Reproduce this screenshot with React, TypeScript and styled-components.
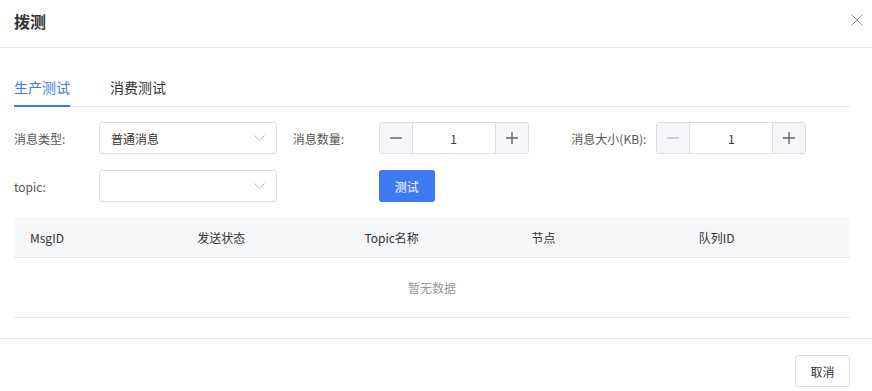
import React from "react";
import styled, { createGlobalStyle } from "styled-components";

const Global = createGlobalStyle`
  html, body { margin: 0; padding: 0; background: #fff; }
  body { font-family: "Noto Sans CJK SC", "Noto Sans", sans-serif; color: #333; }
  * { box-sizing: border-box; }
`;

const Modal = styled.div`
  width: 872px;
  height: 391px;
  background: #fff;
  overflow: hidden;
  display: flex;
  flex-direction: column;
`;

const Header = styled.div`
  height: 48px;
  border-bottom: 1px solid #e4e4ec;
  display: flex;
  align-items: center;
  justify-content: space-between;
  padding: 0 8px 0 14px;
  flex-shrink: 0;
`;

const Title = styled.div`
  font-size: 16px;
  font-weight: 700;
  color: #333;
  line-height: 20px;
  margin-top: -6px;
`;

const Close = styled.button`
  border: none;
  background: none;
  padding: 0;
  width: 14px;
  height: 14px;
  margin-top: -8px;
  display: flex;
  align-items: center;
  justify-content: center;
  cursor: pointer;
`;

const Body = styled.div`
  padding: 26px 22px 0 14px;
  flex-shrink: 0;
`;

const Tabs = styled.div`
  display: flex;
  gap: 40px;
  border-bottom: 1px solid #e4e4ec;
  height: 33px;
`;

const Tab = styled.div<{ $active?: boolean }>`
  font-size: 14px;
  line-height: 20px;
  padding-top: 3px;
  color: ${(p) => (p.$active ? "#3d79f2" : "#333")};
  border-bottom: 2px solid ${(p) => (p.$active ? "#3d79f2" : "transparent")};
  margin-bottom: -1px;
  height: 33px;
`;

const Form = styled.div`
  display: grid;
  grid-template-columns: repeat(3, 1fr);
  row-gap: 16px;
  margin-top: 15px;
`;

const Item = styled.div`
  display: flex;
  align-items: center;
  height: 32px;
`;

const Label = styled.div<{ $w?: number }>`
  width: ${(p) => p.$w ?? 85}px;
  font-size: 12px;
  color: #555;
  flex-shrink: 0;
`;

const SelectBox = styled.div`
  width: 178px;
  height: 32px;
  border: 1px solid #dcdce2;
  border-radius: 3px;
  display: flex;
  align-items: center;
  justify-content: space-between;
  padding: 0 11px 0 11px;
  font-size: 12px;
  color: #333;
`;

const NumberBox = styled.div`
  width: 150px;
  height: 32px;
  border: 1px solid #dcdce2;
  border-radius: 3px;
  display: flex;
  overflow: hidden;
`;

const StepBtn = styled.div<{ $disabled?: boolean }>`
  width: 32px;
  height: 100%;
  background: #f5f6fa;
  display: flex;
  align-items: center;
  justify-content: center;
  color: ${(p) => (p.$disabled ? "#c0c0c8" : "#666")};
  flex-shrink: 0;
`;

const NumValue = styled.div`
  flex: 1;
  border-left: 1px solid #dcdce2;
  border-right: 1px solid #dcdce2;
  display: flex;
  align-items: center;
  justify-content: center;
  font-size: 12px;
  color: #333;
`;

const PrimaryButton = styled.button`
  width: 56px;
  height: 32px;
  border: none;
  border-radius: 3px;
  background: #3d79f2;
  color: #fff;
  font-family: inherit;
  font-size: 12px;
  font-weight: 400;
  padding: 0;
`;

const Table = styled.div`
  margin-top: 16px;
  border-bottom: 1px solid #e4e4ec;
`;

const HeadRow = styled.div`
  display: grid;
  grid-template-columns: repeat(5, 1fr);
  height: 40px;
  background: #f6f7f9;
  border-bottom: 1px solid #e4e4ec;
  align-items: center;
`;

const HeadCell = styled.div`
  padding-left: 16px;
  font-size: 12px;
  font-weight: 400;
  color: #333;
`;

const Empty = styled.div`
  height: 59px;
  display: flex;
  align-items: center;
  justify-content: center;
  font-size: 12px;
  color: #999;
`;

const Footer = styled.div`
  margin-top: 20px;
  border-top: 1px solid #e4e4ec;
  display: flex;
  justify-content: flex-end;
  padding: 16px 22px 0 0;
`;

const DefaultButton = styled.button`
  width: 55px;
  height: 32px;
  border: 1px solid #dcdce2;
  border-radius: 3px;
  background: #fff;
  color: #333;
  font-family: inherit;
  font-size: 12px;
  padding: 0;
`;

const Chevron = () => (
  <svg width="11" height="6" viewBox="0 0 11 6">
    <path d="M0.5 0.5 L5.5 5 L10.5 0.5" fill="none" stroke="#b8b8c0" strokeWidth="1" />
  </svg>
);

const Minus = () => (
  <svg width="14" height="14" viewBox="0 0 14 14">
    <path d="M1 7 H13" stroke="currentColor" strokeWidth="1.6" />
  </svg>
);

const Plus = () => (
  <svg width="14" height="14" viewBox="0 0 14 14">
    <path d="M1 7 H13 M7 1 V13" stroke="currentColor" strokeWidth="1.4" />
  </svg>
);

const Stepper = ({ value, minDisabled }: { value: number; minDisabled?: boolean }) => (
  <NumberBox>
    <StepBtn $disabled={minDisabled}>
      <Minus />
    </StepBtn>
    <NumValue>{value}</NumValue>
    <StepBtn>
      <Plus />
    </StepBtn>
  </NumberBox>
);

const columns = ["MsgID", "发送状态", "Topic名称", "节点", "队列ID"];

export default function App() {
  return (
    <>
      <Global />
      <Modal>
        <Header>
          <Title>拨测</Title>
          <Close aria-label="close">
            <svg width="12" height="12" viewBox="0 0 12 12">
              <path d="M0.5 0.5 L11.5 11.5 M11.5 0.5 L0.5 11.5" stroke="#999" strokeWidth="1" />
            </svg>
          </Close>
        </Header>
        <Body>
          <Tabs>
            <Tab $active>生产测试</Tab>
            <Tab>消费测试</Tab>
          </Tabs>
          <Form>
            <Item>
              <Label>消息类型:</Label>
              <SelectBox>
                <span>普通消息</span>
                <Chevron />
              </SelectBox>
            </Item>
            <Item>
              <Label $w={86}>消息数量:</Label>
              <Stepper value={1} />
            </Item>
            <Item>
              <Label>消息大小(KB):</Label>
              <Stepper value={1} minDisabled />
            </Item>
            <Item>
              <Label>topic:</Label>
              <SelectBox>
                <span />
                <Chevron />
              </SelectBox>
            </Item>
            <Item>
              <Label $w={86} />
              <PrimaryButton>测试</PrimaryButton>
            </Item>
          </Form>
          <Table>
            <HeadRow>
              {columns.map((c) => (
                <HeadCell key={c}>{c}</HeadCell>
              ))}
            </HeadRow>
            <Empty>暂无数据</Empty>
          </Table>
        </Body>
        <Footer>
          <DefaultButton>取消</DefaultButton>
        </Footer>
      </Modal>
    </>
  );
}
